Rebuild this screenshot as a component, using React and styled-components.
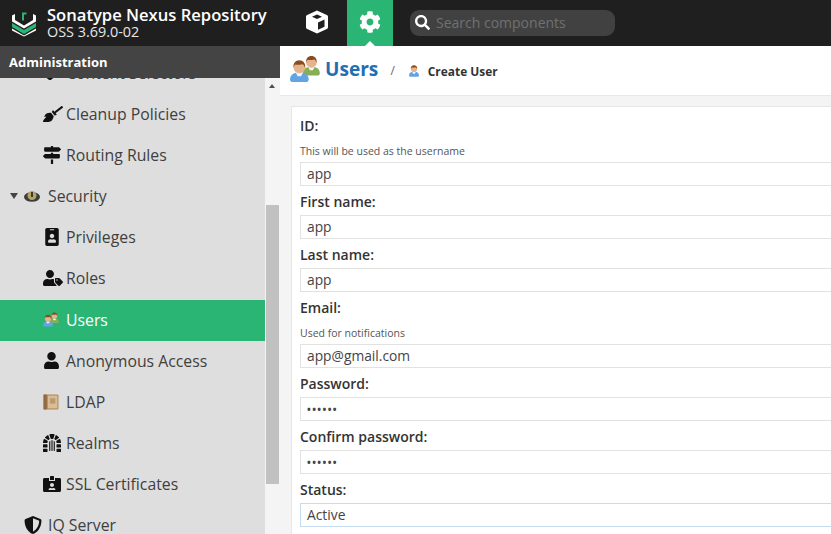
import styled, { createGlobalStyle } from "styled-components";
import {
  FaBroom,
  FaCog,
  FaDungeon,
  FaIdBadge,
  FaIdCardAlt,
  FaMapSigns,
  FaSearch,
  FaShieldAlt,
  FaUser,
  FaUserTag,
} from "react-icons/fa";

const GREEN = "#2ab574";
const FONT = `"Open Sans", "Liberation Sans", sans-serif`;

const GlobalStyle = createGlobalStyle`
  html, body {
    margin: 0;
    height: 100%;
    overflow: hidden;
    background: #f4f4f4;
    font-family: ${FONT};
  }
  * { box-sizing: border-box; }
`;

const Page = styled.div`
  width: 831px;
  height: 534px;
  display: flex;
  flex-direction: column;
  overflow: hidden;
`;

const Header = styled.header`
  height: 46px;
  flex: none;
  display: flex;
  background: #1f1f1f;
  color: #fff;
`;

const Brand = styled.div`
  width: 293px;
  display: flex;
  align-items: center;
  gap: 10px;
  padding-left: 11px;
`;

const BrandText = styled.div`
  display: flex;
  flex-direction: column;
`;

const BrandName = styled.div`
  font-size: 16.6px;
  line-height: 18px;
  font-weight: 600;
  white-space: nowrap;
`;

const BrandVersion = styled.div`
  font-size: 14.4px;
  line-height: 16px;
  color: #e6e6e6;
  white-space: nowrap;
`;

const ModeButton = styled.div`
  position: relative;
  width: ${(p) => (p.$active ? "46px" : "47px")};
  height: 46px;
  margin-left: ${(p) => (p.$active ? "7px" : "0")};
  padding-bottom: 3px;
  display: flex;
  align-items: center;
  justify-content: center;
  background: ${(p) => (p.$active ? GREEN : "transparent")};

  ${(p) =>
    p.$active &&
    `&::after {
      content: "";
      position: absolute;
      left: 18px;
      bottom: 0;
      border: 5px solid transparent;
      border-top: 0;
      border-bottom-color: #fff;
    }`}
`;

const Search = styled.div`
  width: 205px;
  height: 26px;
  margin: 10px 0 0 17px;
  display: flex;
  align-items: center;
  gap: 6px;
  padding: 0 0 2px 5px;
  border-radius: 9px;
  background: #414141;
  color: #6f7172;
  font-size: 14px;
`;

const Body = styled.div`
  flex: 1;
  min-height: 0;
  display: flex;
`;

const Sidebar = styled.aside`
  width: 280px;
  flex: none;
  display: flex;
  flex-direction: column;
  min-height: 0;
`;

const SidebarTitle = styled.div`
  height: 32px;
  flex: none;
  display: flex;
  align-items: center;
  padding-left: 9px;
  background: #444;
  color: #fff;
  font-size: 13px;
  font-weight: 700;
`;

const SidebarBody = styled.div`
  flex: 1;
  min-height: 0;
  display: flex;
  overflow: hidden;
`;

const Tree = styled.div`
  width: 265px;
  background: #dedede;
  overflow: hidden;
`;

const TreeList = styled.div`
  margin-top: -25px;
`;

const TreeRow = styled.div`
  height: 41px;
  margin-top: ${(p) => (p.$selected ? "1px" : "0")};
  display: flex;
  align-items: center;
  padding: 0 0 2px ${(p) => (p.$depth === 2 ? "43px" : "24px")};
  gap: ${(p) => (p.$depth === 2 ? "5px" : "6px")};
  background: ${(p) => (p.$selected ? GREEN : "transparent")};
  color: ${(p) => (p.$selected ? "#fff" : "#3f3f3f")};
  font-size: 15.8px;
  white-space: nowrap;
`;

const RowIcon = styled.span`
  width: 18px;
  height: 18px;
  flex: none;
  display: flex;
  align-items: center;
  justify-content: flex-start;
  color: #111;

  svg {
    flex: none;
  }
`;

const TwistyRow = styled(TreeRow)`
  position: relative;
`;

const Twisty = styled.span`
  position: absolute;
  left: 10px;
  width: 0;
  height: 0;
  border-left: 4px solid transparent;
  border-right: 4px solid transparent;
  border-top: 6px solid #444;
`;

const ScrollTrack = styled.div`
  width: 15px;
  flex: none;
  position: relative;
  background: #f4f4f4;
`;

const ScrollArrow = styled.span`
  position: absolute;
  top: 6px;
  left: 4px;
  width: 0;
  height: 0;
  border-left: 3.5px solid transparent;
  border-right: 3.5px solid transparent;
  border-bottom: 4px solid #505050;
`;

const ScrollThumb = styled.div`
  position: absolute;
  top: 127px;
  left: 1px;
  width: 13px;
  height: 279px;
  background: #c1c1c1;
`;

const Main = styled.main`
  flex: 1;
  min-width: 0;
  display: flex;
  flex-direction: column;
  overflow: hidden;
`;

const Breadcrumb = styled.div`
  height: 50px;
  flex: none;
  display: flex;
  align-items: center;
  padding: 0 0 1px 10px;
  background: #fff;
  border-bottom: 1px solid #e8e8e8;
`;

const CrumbTitle = styled.span`
  margin: 0 0 3px 5px;
  color: #1f6fb5;
  font-size: 19.1px;
  font-weight: 700;
`;

const CrumbSeparator = styled.span`
  margin: 0 14px 0 12px;
  color: #666;
  font-size: 12px;
`;

const CrumbLeaf = styled.span`
  margin: 2px 0 0 9px;
  color: #333;
  font-size: 11.9px;
  font-weight: 700;
`;

const Content = styled.div`
  flex: 1;
  min-height: 0;
  padding: 10px 0 0 11px;
  background: #f4f4f4;
`;

const Panel = styled.form`
  width: 600px;
  height: 460px;
  padding: 9px 0 0 8px;
  background: #fff;
  border: 1px solid #e6e6e6;
`;

const Field = styled.div`
  margin-bottom: 6px;
`;

const Label = styled.div`
  height: 19px;
  line-height: 19px;
  color: #333;
  font-size: 14px;
  font-weight: 600;
`;

const Help = styled.div`
  height: 15px;
  line-height: 15px;
  margin: 9px 0 3px;
  color: #555;
  font-size: 10.5px;
`;

const Input = styled.div`
  height: 24px;
  margin-top: ${(p) => (p.$flush ? "0" : "4px")};
  padding: 0 0 1px 6px;
  display: flex;
  align-items: center;
  background: #fff;
  border: 1px solid ${(p) => (p.$focus ? "#c4dcf0" : "#e2e2e2")};
  color: #444;
  font-size: 13.8px;
`;

const Dots = styled.span`
  font-size: 10px;
  letter-spacing: 1.4px;
  font-weight: 700;
`;

const LogoIcon = () => (
  <svg width="26" height="27" viewBox="0 0 26 26">
    <path d="M1 5v6l12 7 12-7V5l-3-1.500v6l-9 5.500-9-5.500v-6z" fill="#fff" />
    <path d="M1 12.500v4l12 7 12-7v-4l-12 7z" fill="#2ab574" />
    <path d="M1 18v2l12 6 12-6v-2l-12 7z" fill="#fff" />
    <path d="M11 2h4.500v2H13v6h-2z" fill="#2ab574" />
  </svg>
);

const CubeIcon = () => (
  <svg width="24" height="24" viewBox="0 0 24 24">
    <path
      d="M12 .5 21.800 5c.7.300 1.200 1 1.200 1.800v10.400c0 .8-.5 1.500-1.200 1.800L12 23.500 2.200 19c-.7-.3-1.200-1-1.200-1.800V6.800C1 6 1.500 5.300 2.200 5z"
      fill="#fff"
    />
    <path d="m13 12.500 6.500-3v7.200L13 19.800z" fill="#1f1f1f" />
    <path d="M7 6.800 12 4.500l5 2.300-5 2.300z" fill="#1f1f1f" />
  </svg>
);

const UserFigure = ({ x = 0, y = 0, shirt = "#63a4e2", scale = 1 }) => (
  <g transform={`translate(${x} ${y}) scale(${scale})`}>
    <path d="M0 18c0-4 3-6 6-6h4c3 0 6 2 6 6 0 1-1 2-2 2H2c-1 0-2-1-2-2z" fill={shirt} />
    <path d="M5 12h6l-1.500 3h-3z" fill="#f1f5f9" />
    <circle cx="8" cy="7.500" r="5" fill="#e6b48a" />
    <path d="M3 8c-.5-4 1.800-6.500 5-6.500S13.500 4 13 8c-.8-2-1.500-3-2.500-3.200C8.500 5.500 5.500 5.500 4.500 5 3.800 5.500 3.400 6.500 3 8z" fill="#8a4b20" />
  </g>
);

const UsersIcon = ({ size }) => (
  <svg width={size} height={size} viewBox="0 0 30 30">
    <UserFigure x={13} y={-0.500} scale={1.050} shirt="#86ae55" />
    <UserFigure x={0} y={3.600} scale={1.170} />
  </svg>
);

const UserIcon = () => (
  <svg width="10" height="15" viewBox="0 0 16 22">
    <UserFigure y={1} />
  </svg>
);

const SecurityIcon = () => (
  <svg width="16" height="12" viewBox="0 0 16 12">
    <ellipse cx="8" cy="7" rx="8" ry="4.800" fill="#3a3f3a" />
    <circle cx="8" cy="5.500" r="4.500" fill="#b7a468" />
    <rect x="7.100" y="2" width="1.800" height="5" fill="#2f2f2f" />
  </svg>
);

const BookIcon = () => (
  <svg width="16" height="16" viewBox="0 0 15 15">
    <rect x="0.500" y="0.500" width="14" height="14" rx="1" fill="#b5885a" />
    <rect x="0.500" y="0.500" width="3" height="14" fill="#8f6a43" />
    <rect x="4.500" y="1.500" width="9" height="12" fill="#d8bd96" />
    <rect x="6.500" y="4" width="5" height="5" fill="#b99a70" />
  </svg>
);

const children = [
  { label: "Content Selectors", icon: <FaShieldAlt size={14} /> },
  { label: "Cleanup Policies", icon: <FaBroom size={20} /> },
  { label: "Routing Rules", icon: <FaMapSigns size={18} /> },
];

const securityRows = [
  { label: "Privileges", icon: <FaIdBadge size={18} /> },
  { label: "Roles", icon: <FaUserTag size={20} /> },
  { label: "Users", icon: <UsersIcon size={16} />, selected: true },
  { label: "Anonymous Access", icon: <FaUser size={17} /> },
  { label: "LDAP", icon: <BookIcon /> },
  { label: "Realms", icon: <FaDungeon size={18} /> },
  { label: "SSL Certificates", icon: <FaIdCardAlt size={18} /> },
];

const fields = [
  { label: "ID:", help: "This will be used as the username", value: "app" },
  { label: "First name:", value: "app" },
  { label: "Last name:", value: "app" },
  { label: "Email:", help: "Used for notifications", value: "app@gmail.com" },
  { label: "Password:", secret: true },
  { label: "Confirm password:", secret: true },
  { label: "Status:", value: "Active", focus: true },
];

const Row = ({ item }) => (
  <TreeRow $depth={2} $selected={item.selected}>
    <RowIcon>{item.icon}</RowIcon>
    {item.label}
  </TreeRow>
);

export default function App() {
  return (
    <Page>
      <GlobalStyle />
      <Header>
        <Brand>
          <LogoIcon />
          <BrandText>
            <BrandName>Sonatype Nexus Repository</BrandName>
            <BrandVersion>OSS 3.69.0-02</BrandVersion>
          </BrandText>
        </Brand>
        <ModeButton>
          <CubeIcon />
        </ModeButton>
        <ModeButton $active>
          <FaCog size={22} color="#fff" />
        </ModeButton>
        <Search>
          <FaSearch size={15} color="#fff" />
          Search components
        </Search>
      </Header>
      <Body>
        <Sidebar>
          <SidebarTitle>Administration</SidebarTitle>
          <SidebarBody>
            <Tree>
              <TreeList>
                {children.map((item) => (
                  <Row key={item.label} item={item} />
                ))}
                <TwistyRow>
                  <Twisty />
                  <RowIcon>
                    <SecurityIcon />
                  </RowIcon>
                  Security
                </TwistyRow>
                {securityRows.map((item) => (
                  <Row key={item.label} item={item} />
                ))}
                <TreeRow>
                  <RowIcon>
                    <FaShieldAlt size={18} />
                  </RowIcon>
                  IQ Server
                </TreeRow>
              </TreeList>
            </Tree>
            <ScrollTrack>
              <ScrollArrow />
              <ScrollThumb />
            </ScrollTrack>
          </SidebarBody>
        </Sidebar>
        <Main>
          <Breadcrumb>
            <UsersIcon size={30} />
            <CrumbTitle>Users</CrumbTitle>
            <CrumbSeparator>/</CrumbSeparator>
            <UserIcon />
            <CrumbLeaf>Create User</CrumbLeaf>
          </Breadcrumb>
          <Content>
            <Panel>
              {fields.map((f) => (
                <Field key={f.label}>
                  <Label>{f.label}</Label>
                  {f.help && <Help>{f.help}</Help>}
                  <Input $flush={!!f.help} $focus={f.focus}>
                    {f.secret ? <Dots>••••••</Dots> : f.value}
                  </Input>
                </Field>
              ))}
            </Panel>
          </Content>
        </Main>
      </Body>
    </Page>
  );
}
